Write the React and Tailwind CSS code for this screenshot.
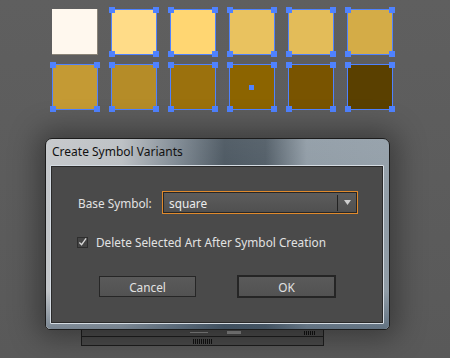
const rows = [
  ['#fff8ee', '#ffdc88', '#ffd672', '#e9c25f', '#e3bc59', '#d4ac47'],
  ['#c49a34', '#b58c28', '#9b710d', '#8c6400', '#795400', '#5a4000'],
];

function Swatch({ color, selected, center }) {
  return (
    <div
      className={`relative w-[46px] h-[46px] ${selected ? 'border border-[#4f82ff]' : 'border-r border-b border-[#8a8478]'}`}
      style={{ backgroundColor: color }}
    >
      {selected && (
        <>
          <span className="absolute -left-[3px] -top-[3px] w-[6px] h-[6px] bg-[#4f82ff]" />
          <span className="absolute -right-[3px] -top-[3px] w-[6px] h-[6px] bg-[#4f82ff]" />
          <span className="absolute -left-[3px] -bottom-[3px] w-[6px] h-[6px] bg-[#4f82ff]" />
          <span className="absolute -right-[3px] -bottom-[3px] w-[6px] h-[6px] bg-[#4f82ff]" />
        </>
      )}
      {center && <span className="absolute left-[19px] top-[20px] w-[5px] h-[5px] bg-[#4f82ff]" />}
    </div>
  );
}

function Dialog() {
  return (
    <div className="relative z-10 ml-[45px] w-[345px] h-[192px] rounded-t-[7px] rounded-b-[5px] border border-[#1c1c1c] shadow-[0_0_28px_8px_rgba(0,0,0,0.35)] bg-[linear-gradient(90deg,#c3c6c9_0%,#b9bdc1_22%,#7b8690_38%,#46525c_52%,#4c5862_64%,#8d99a3_76%,#909ca6_100%)] flex flex-col">
      <div className="absolute inset-0 rounded-[5px] bg-[linear-gradient(180deg,rgba(255,255,255,0.08)_0%,transparent_40%,transparent_80%,rgba(60,80,100,0.55)_100%)]" />
      <div className="relative h-[26px] pl-[6px] pt-[5px] text-[12px] leading-[16px] text-[#111] font-['Noto_Sans',sans-serif]">
        Create Symbol Variants
      </div>
      <div className="relative ml-[4px] w-[334px] h-[159px] border border-[#d4dbe2] rounded-[1px]">
        <div className="h-full border border-[#2a2a2a] bg-[#4a4a4a] text-[11.8px] text-[#e2e2e2] font-['Noto_Sans',sans-serif]">
          <div className="flex items-center mt-[24px] ml-[26px]">
            <span className="w-[84px] leading-[16px]">Base Symbol:</span>
            <div className="w-[196px] h-[23px] border border-[#e08a2c]">
              <div className="h-full border border-[#262626] bg-[linear-gradient(180deg,#5c5c5c,#505050)] flex items-center">
                <span className="flex-1 pl-[5px] leading-[16px] text-[#ececec]">square</span>
                <span className="w-px h-[16px] bg-[#222]" />
                <span className="w-[18px] flex justify-center">
                  <svg width="7" height="5" viewBox="0 0 7 5"><path d="M0 0h7L3.5 5z" fill="#cfcfcf" /></svg>
                </span>
              </div>
            </div>
          </div>
          <div className="flex items-center mt-[20px] ml-[25px]">
            <div className="w-[11px] h-[11px] border border-[#2e2e2e] bg-[#444] flex items-center justify-center">
              <svg width="10" height="10" viewBox="0 0 10 10"><path d="M1.5 5.5L4 8L9 1" stroke="#d8d8d8" strokeWidth="1.5" fill="none" /></svg>
            </div>
            <span className="ml-[8px] leading-[16px]">Delete Selected Art After Symbol Creation</span>
          </div>
          <div className="flex items-start mt-[25px] ml-[47px]">
            <div className="mt-[1px] w-[97px] h-[21px] border border-[#262626] bg-[linear-gradient(180deg,#5a5a5a,#525252)] flex items-center justify-center leading-[16px]">
              Cancel
            </div>
            <div className="ml-[41px] w-[99px] h-[23px] border-2 border-[#252525] bg-[linear-gradient(180deg,#5a5a5a,#525252)] flex items-center justify-center leading-[16px]">
              OK
            </div>
          </div>
        </div>
      </div>
    </div>
  );
}

export default function App() {
  return (
    <div className="w-[450px] h-[358px] overflow-hidden bg-[linear-gradient(180deg,#5f5f5f,#595959)] font-['Noto_Sans',sans-serif]">
      <div className="pt-[9px] pl-[52px] flex flex-col gap-[9px]">
        {rows.map((row, r) => (
          <div key={r} className="flex gap-[13px]">
            {row.map((c, i) => (
              <Swatch key={i} color={c} selected={!(r === 0 && i === 0)} center={r === 1 && i === 3} />
            ))}
          </div>
        ))}
      </div>
      <div className="mt-[28px]">
        <Dialog />
      </div>
      <div className="relative -mt-[10px] ml-[81px] w-[243px] h-[26px] border border-[#1e1e1e] bg-[#4a4a4a] flex flex-col">
        <div className="h-[16px] border-b border-[#1e1e1e] relative">
          <span className="absolute left-[108px] top-[11px] w-[18px] h-px bg-[#8a8a8a]" />
          <span className="absolute left-[145px] top-[10px] w-[14px] h-[3px] bg-[#8a8a8a]" />
          <span className="absolute left-[222px] top-[10px] w-[12px] h-[4px] bg-[repeating-linear-gradient(90deg,#111_0_1px,transparent_1px_2px)]" />
        </div>
        <div className="flex-1 relative">
          <span className="absolute left-[111px] top-[2px] w-[20px] h-[5px] bg-[repeating-linear-gradient(90deg,#111_0_1px,transparent_1px_2px)]" />
        </div>
      </div>
    </div>
  );
}
